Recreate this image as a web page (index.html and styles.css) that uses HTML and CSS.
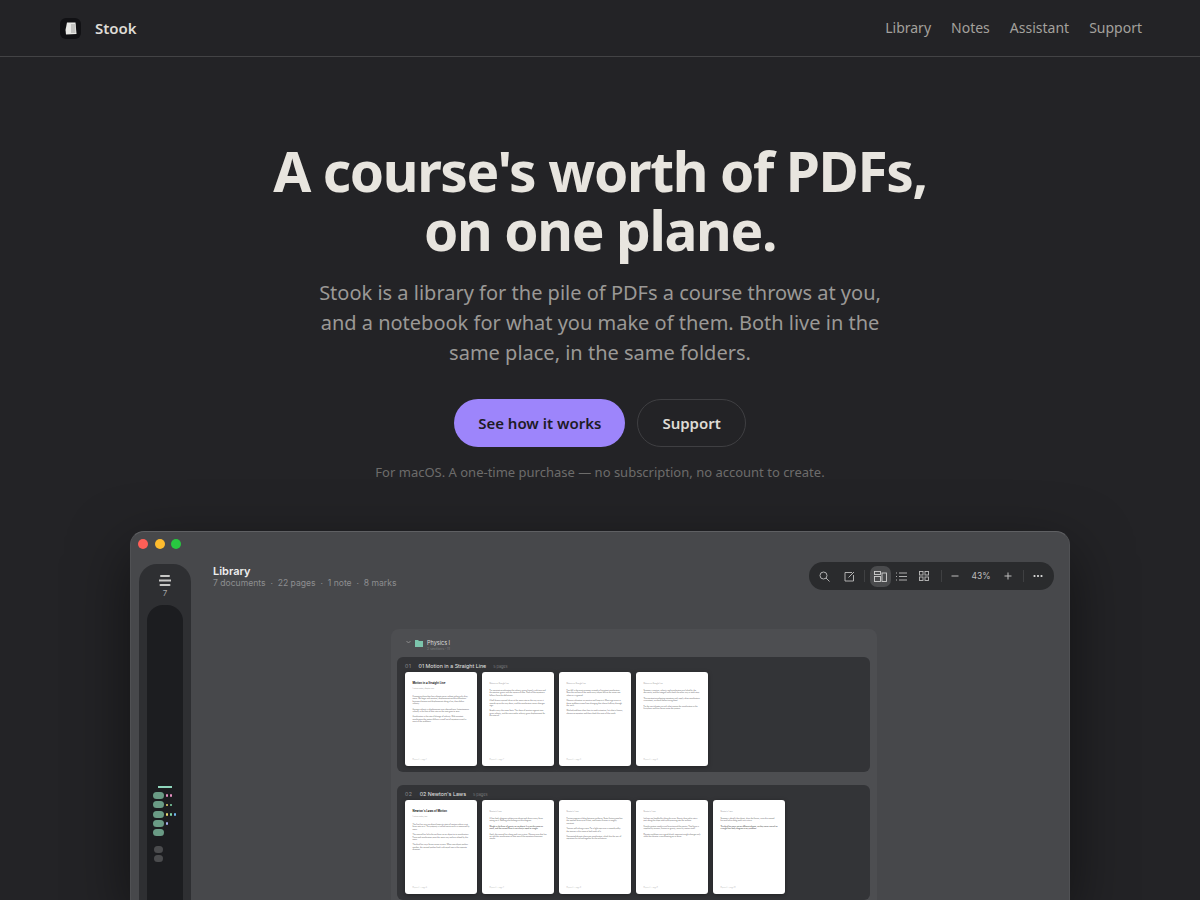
FILE: index.html
```html
<!DOCTYPE html>
<html lang="en">
<head>
    <meta charset="UTF-8">
    <meta name="viewport" content="width=device-width, initial-scale=1.0">
    <title>Stook</title>
    <link rel="stylesheet" href="styles.css">
</head>
<body>
    <header class="site-header">
        <a class="brand" href="#">
            <span class="brand-mark">
                <svg width="12" height="13" viewBox="0 0 12 13"><path d="M2 .5h8.500L11.500 12 1 12.500.5 8z" fill="#e9e9e6"/><path d="M6 2h4.500v9H6z" fill="#c4c4c2"/></svg>
            </span>
            <span>Stook</span>
        </a>
        <nav class="site-nav">
            <a href="#">Library</a>
            <a href="#">Notes</a>
            <a href="#">Assistant</a>
            <a href="#">Support</a>
        </nav>
    </header>

    <section class="hero">
        <h1>A course's worth of PDFs,<br>on one plane.</h1>
        <p class="lead">Stook is a library for the pile of PDFs a course throws at you, and a notebook for what you make of them. Both live in the same place, in the same folders.</p>
        <div class="actions">
            <a class="btn btn-primary" href="#">See how it works</a>
            <a class="btn btn-ghost" href="#">Support</a>
        </div>
        <p class="fine">For macOS. A one-time purchase — no subscription, no account to create.</p>
    </section>

    <div class="app-window">
        <div class="traffic">
            <span class="light red"></span>
            <span class="light yellow"></span>
            <span class="light green"></span>
        </div>
        <div class="app-body">
            <aside class="rail">
                <div class="rail-head">
                    <svg width="12" height="11" viewBox="0 0 12 11"><path d="M2 1h8M.5 5.500h11M1.500 10h9" stroke="#c8c8c6" stroke-width="2" stroke-linecap="round"/></svg>
                    <span>7</span>
                </div>
                <div class="rail-strip">
                    <div class="rail-bar"></div>
                    <div class="rail-row"><i class="pill"></i><i class="dot pink"></i><i class="dot pink"></i></div>
                    <div class="rail-row"><i class="pill"></i><i class="dot sand"></i><i class="dot mint"></i></div>
                    <div class="rail-row"><i class="pill"></i><i class="dot sand"></i><i class="dot mint"></i><i class="dot blue"></i></div>
                    <div class="rail-row"><i class="pill"></i><i class="dot lilac"></i></div>
                    <div class="rail-row"><i class="pill"></i></div>
                    <div class="rail-row rail-gap"><i class="pill muted"></i></div>
                    <div class="rail-row"><i class="pill muted"></i></div>
                </div>
            </aside>

            <main class="workspace">
                <div class="work-head">
                    <div>
                        <div class="work-title">Library</div>
                        <div class="work-meta">7 documents &nbsp;·&nbsp; 22 pages &nbsp;·&nbsp; 1 note &nbsp;·&nbsp; 8 marks</div>
                    </div>
                    <div class="toolbar">
                        <span class="tool"><svg width="11" height="11" viewBox="0 0 11 11" fill="none" stroke="#bebebe" stroke-width=".9"><circle cx="4.500" cy="4.500" r="3.500"/><path d="M7 7l3.500 3.500"/></svg></span>
                        <span class="tool tool-edit"><svg width="11" height="11" viewBox="0 0 11 11" fill="none" stroke="#bebebe" stroke-width=".9"><path d="M8 1.500H1v8.500h8.500V4"/><path d="M4.500 6.500L10 1"/></svg></span>
                        <i class="tool-sep"></i>
                        <span class="tool tool-on"><svg width="13" height="11" viewBox="0 0 13 11" fill="none" stroke="#d0d0d0" stroke-width=".9"><rect x=".5" y=".5" width="6" height="3"/><rect x=".5" y="5.500" width="6" height="5"/><rect x="8" y="2" width="4.500" height="8.500"/></svg></span>
                        <span class="tool tool-list"><svg width="11" height="9" viewBox="0 0 11 9" fill="none" stroke="#bebebe" stroke-width=".9"><path d="M3 1h8M3 4.500h8M3 8h8M0 1h1M0 4.500h1M0 8h1"/></svg></span>
                        <span class="tool tool-grid"><svg width="10" height="10" viewBox="0 0 10 10" fill="none" stroke="#bebebe" stroke-width=".9"><rect x=".5" y=".5" width="3.500" height="3.500"/><rect x="6" y=".5" width="3.500" height="3.500"/><rect x=".5" y="6" width="3.500" height="3.500"/><rect x="6" y="6" width="3.500" height="3.500"/></svg></span>
                        <i class="tool-sep"></i>
                        <span class="tool tool-minus"><svg width="8" height="8" viewBox="0 0 8 8" stroke="#bebebe" stroke-width="1"><path d="M.5 4h7"/></svg></span>
                        <span class="zoom-val">43%</span>
                        <span class="tool"><svg width="8" height="8" viewBox="0 0 8 8" stroke="#bebebe" stroke-width="1"><path d="M.5 4h7M4 .5v7"/></svg></span>
                        <i class="tool-sep"></i>
                        <span class="tool tool-more"><svg width="10" height="4" viewBox="0 0 10 4" fill="#e0e0e0"><circle cx="1.500" cy="2" r="1.100"/><circle cx="5" cy="2" r="1.100"/><circle cx="8.500" cy="2" r="1.100"/></svg></span>
                    </div>
                </div>

                <div class="folder">
                    <div class="folder-head">
                        <svg width="5" height="4" viewBox="0 0 5 4" fill="none" stroke="#9a9a9a" stroke-width=".8"><path d="M.5 1l2 2 2-2"/></svg>
                        <svg width="8" height="7" viewBox="0 0 8 7"><path d="M0 0h3l1 1h4v6H0z" fill="#7cc4ac"/></svg>
                        <div class="folder-text">
                            <div class="folder-name">Physics I</div>
                            <div class="folder-meta">2 sections · 11</div>
                        </div>
                    </div>

                    <section class="chapter">
                        <div class="chapter-head"><span class="chapter-no">01</span><span class="chapter-name">01 Motion in a Straight Line</span><span class="chapter-count">5 pages</span></div>
                        <div class="pages">
                            <article class="page">
                                <h4>Motion in a Straight Line</h4>
                                <small>Lecture notes, chapter one</small>
                                <p>Kinematics describes how objects move without asking why they move. We begin with position, displacement and the distinction between distance and displacement along a line, then define velocity.</p>
                                <p>Average velocity is displacement over elapsed time. Instantaneous velocity is the limit of that ratio as the time goes to zero.</p>
                                <p>Acceleration is the rate of change of velocity. With constant acceleration the motion follows a small set of equations used in most of the problems.</p>
                                <footer>Physics I — page 1</footer>
                            </article>
                            <article class="page">
                                <small>Motion in a Straight Line</small>
                                <p>For constant acceleration the velocity grows linearly with time and the position grows with the square of time. Each of the equations follows from the definitions.</p>
                                <p>A ball thrown upward slows at the same rate on the way up as it speeds up on the way down, and the acceleration never changes sign.</p>
                                <p>Graphs carry the same facts. The slope of position against time gives velocity, and the area under velocity gives displacement for the interval.</p>
                                <footer>Physics I — page 2</footer>
                            </article>
                            <article class="page">
                                <small>Motion in a Straight Line</small>
                                <p>Free fall is the most common example of constant acceleration. Near the surface of the earth every object falls at the same rate when air is ignored.</p>
                                <p>Choose a direction as positive and keep to it. Most sign errors in these problems come from changing that choice halfway through the work.</p>
                                <p>Worked problems show how to read a situation, list what is known, choose an equation and then check the units of the result.</p>
                                <footer>Physics I — page 3</footer>
                            </article>
                            <article class="page">
                                <small>Motion in a Straight Line</small>
                                <p>Summary: position, velocity and acceleration are linked by the derivative, and the integral walks back the other way in each step.</p>
                                <p>The constant acceleration equations only apply when acceleration is constant, so check before using them.</p>
                                <p>For the next chapter we ask what causes the acceleration in the first place and how forces enter the picture.</p>
                                <footer>Physics I — page 4</footer>
                            </article>
                        </div>
                    </section>

                    <section class="chapter">
                        <div class="chapter-head"><span class="chapter-no">02</span><span class="chapter-name">02 Newton's Laws</span><span class="chapter-count">5 pages</span></div>
                        <div class="pages">
                            <article class="page">
                                <h4>Newton's Laws of Motion</h4>
                                <small>Lecture notes, two</small>
                                <p>The first law says an object keeps its state of motion unless a net force acts on it. This property is called inertia and it is measured by mass.</p>
                                <p>The second law links the net force on an object to its acceleration. Force and acceleration point the same way and are related by the mass.</p>
                                <p>The third law says forces come in pairs. When one object pushes another, the second pushes back with equal size in the opposite direction.</p>
                                <footer>Physics I — page 6</footer>
                            </article>
                            <article class="page">
                                <small>Newton's Laws</small>
                                <p>A free body diagram isolates one object and draws every force acting on it. Nothing else belongs on the diagram.</p>
                                <p class="dark">Weight is the force of gravity on an object. It is not the same as mass, and the normal force is not always equal to weight.</p>
                                <p>Apply the second law along each axis in turn. Choose axes that line up with the acceleration so that one of the equations becomes simple.</p>
                                <footer>Physics I — page 7</footer>
                            </article>
                            <article class="page">
                                <small>Newton's Laws</small>
                                <p>Friction opposes sliding between surfaces. Static friction matches the applied force up to a limit, and kinetic friction is roughly constant.</p>
                                <p>Tension pulls along a rope. For a light rope over a smooth pulley the tension is the same at both ends of it.</p>
                                <p>Connected objects share one acceleration, which lets the pair of equations be solved together for the unknowns.</p>
                                <footer>Physics I — page 8</footer>
                            </article>
                            <article class="page">
                                <small>Newton's Laws</small>
                                <p>Inclines are handled by tilting the axes. Gravity then splits into a part along the slope and a part pressing into the surface.</p>
                                <p>Circular motion needs a net force toward the centre. That force is supplied by tension, friction or gravity, never by motion itself.</p>
                                <p>Elevator problems are a good check: apparent weight changes only while the elevator is accelerating up or down.</p>
                                <footer>Physics I — page 9</footer>
                            </article>
                            <article class="page">
                                <small>Newton's Laws</small>
                                <p>Summary: identify the object, draw the forces, write the second law and solve along each axis in turn.</p>
                                <p class="dark">The third law pairs act on different objects, so they never cancel on a single free body diagram in any problem.</p>
                                <footer>Physics I — page 10</footer>
                            </article>
                        </div>
                    </section>
                </div>
            </main>
        </div>
    </div>
</body>
</html>
```

FILE: styles.css
```css
* {
    box-sizing: border-box;
}
html, body {
    margin: 0;
    padding: 0;
    height: 900px;
    overflow: hidden;
}
body {
    font-family: "Noto Sans", sans-serif;
    background-color: #232326;
    color: #e8e5df;
}
a {
    color: inherit;
    text-decoration: none;
}

/* header */
.site-header {
    height: 57px;
    padding: 0 58px 0 60px;
    display: flex;
    align-items: center;
    justify-content: space-between;
    border-bottom: 1px solid #434345;
}
.brand {
    display: flex;
    align-items: center;
    gap: 14px;
    font-size: 15px;
    font-weight: 600;
    color: #dedbd5;
}
.brand-mark {
    width: 21px;
    height: 21px;
    border-radius: 6px;
    background-color: #111114;
    display: flex;
    align-items: center;
    justify-content: center;
}
.site-nav {
    display: flex;
    gap: 20px;
    padding-bottom: 2px;
    font-size: 14px;
    color: #a3a19d;
}

/* hero */
.hero {
    padding-top: 84px;
    text-align: center;
}
h1 {
    margin: 0;
    font-size: 55px;
    line-height: 59.400px;
    font-weight: 700;
    letter-spacing: -0.025em;
    color: #e8e5df;
}
.lead {
    width: 600px;
    margin: 18.200px auto 0;
    font-size: 20px;
    line-height: 30px;
    color: #9b9996;
}
.actions {
    display: flex;
    justify-content: center;
    gap: 12px;
    margin-top: 31px;
}
.btn {
    height: 48px;
    border-radius: 25px;
    display: flex;
    align-items: center;
    font-size: 15px;
    font-weight: 600;
}
.btn-primary {
    padding: 0 24px;
    background-color: #9d85fb;
    color: #1d1b26;
}
.btn-ghost {
    padding: 0 24px;
    border: 1px solid #3f3f42;
    color: #dedbd5;
}
.fine {
    margin: 16px 0 0;
    font-size: 13px;
    line-height: 18px;
    color: #6d6c6b;
}

/* app window */
.app-window {
    width: 940px;
    height: 369px;
    margin: 50px auto 0;
    border-radius: 14px 14px 0 0;
    border: 1px solid #505154;
    border-top-color: #5f6063;
    border-bottom: none;
    background-color: #47484b;
    box-shadow: 0 20px 60px rgba(0, 0, 0, 0.5);
    overflow: hidden;
    font-family: Inter, sans-serif;
}
.traffic {
    height: 32px;
    padding: 7px 0 0 7px;
    display: flex;
    gap: 6.500px;
}
.light {
    width: 10px;
    height: 10px;
    border-radius: 50%;
}
.red { background-color: #ff5f57; }
.yellow { background-color: #febc2e; }
.green { background-color: #28c840; }

.app-body {
    display: flex;
    padding-left: 8px;
}
.rail {
    width: 52px;
    height: 340px;
    flex-shrink: 0;
    padding: 0 8px;
    border-radius: 18px 18px 0 0;
    background-color: #2e2f32;
}
.rail-head {
    height: 41px;
    padding-top: 11px;
    display: flex;
    flex-direction: column;
    align-items: center;
    gap: 2px;
    font-size: 8px;
    line-height: 10px;
    color: #a6a6a6;
}
.rail-strip {
    height: 300px;
    padding: 181px 0 0 6px;
    border-radius: 16px 16px 0 0;
    background-color: #1c1d20;
}
.rail-bar {
    width: 14px;
    height: 2px;
    margin: 0 0 3px 5px;
    background-color: #8fd6bc;
}
.rail-row {
    height: 9.300px;
    display: flex;
    align-items: center;
    gap: 1.500px;
}
.rail-gap {
    margin-top: 7px;
}
.pill {
    width: 11px;
    height: 7px;
    border-radius: 4px;
    background-color: #6a9b85;
}
.pill.muted {
    width: 9px;
    margin-left: 1px;
    background-color: #4a4b4d;
}
.dot {
    width: 2.600px;
    height: 2.600px;
    border-radius: 1px;
}
.dot.pink { background-color: #e58fc0; }
.dot.sand { background-color: #e8d86e; }
.dot.mint { background-color: #7fd6a8; }
.dot.blue { background-color: #6fb6ee; }
.dot.lilac { background-color: #a6aef0; }

.workspace {
    flex: 1;
    min-width: 0;
    padding-right: 15px;
}
.work-head {
    display: flex;
    justify-content: space-between;
    align-items: flex-start;
    height: 67px;
    padding-left: 22px;
    margin-top: -2px;
}
.work-title {
    margin-top: 2.500px;
    font-size: 11px;
    line-height: 12px;
    font-weight: 600;
    color: #eeeeee;
}
.work-meta {
    margin-top: 1px;
    font-size: 8.600px;
    line-height: 11px;
    color: #8d8e90;
}
.toolbar {
    width: 245px;
    height: 28px;
    padding-left: 4.500px;
    border-radius: 14px;
    background-color: #2a2b2d;
    display: flex;
    align-items: center;
    gap: 1.500px;
}
.tool {
    width: 21px;
    height: 21px;
    border-radius: 7px;
    display: flex;
    align-items: center;
    justify-content: center;
}
.tool-edit {
    margin-left: 2.500px;
}
.tool-list {
    margin-left: -1.500px;
}
.tool-grid {
    margin-right: 1.500px;
}
.tool-minus {
    width: 17px;
}
.tool-more {
    width: 18px;
}
.tool-on {
    background-color: #4a4b4d;
}
.tool-sep {
    width: 1px;
    height: 12px;
    margin: 0 3.500px 0 3px;
    background-color: #3f4042;
}
.zoom-val {
    width: 31px;
    padding-left: 1px;
    text-align: center;
    font-size: 8.500px;
    color: #bebebe;
}

/* folder and pages */
.folder {
    width: 486px;
    margin-left: 200px;
    padding: 0 7px 0 6px;
    border-radius: 8px 8px 0 0;
    background-color: #4d4e51;
}
.folder-head {
    height: 28px;
    padding: 8px 0 0 9px;
    display: flex;
    align-items: flex-start;
    gap: 4px;
}
.folder-head svg {
    margin-top: 3px;
}
.folder-text {
    margin-top: 3px;
}
.folder-name {
    font-size: 5.500px;
    line-height: 7px;
    color: #dddddd;
}
.folder-meta {
    font-size: 3.500px;
    line-height: 4px;
    color: #7d7e80;
}
.chapter {
    height: 115px;
    margin-bottom: 13px;
    padding: 0 8px;
    border-radius: 6px;
    background-color: #333437;
}
.chapter-head {
    height: 15px;
    padding-top: 3px;
    display: flex;
    align-items: center;
    gap: 7px;
    font-size: 5.300px;
    color: #e6e6e6;
}
.chapter-no {
    color: #8a8b8d;
    letter-spacing: 0.1em;
}
.chapter-count {
    font-size: 3.800px;
    color: #77787a;
}
.pages {
    display: flex;
    gap: 4.700px;
}
.page {
    position: relative;
    width: 72.300px;
    height: 93.500px;
    padding: 9.500px 7.500px 0;
    border-radius: 3px;
    background-color: #ffffff;
    box-shadow: 0 1px 4px rgba(0, 0, 0, 0.35);
    color: #6a6a6a;
    font-size: 1.800px;
    line-height: 2.400px;
}
.page h4 {
    margin: 0 0 2px;
    font-size: 2.800px;
    line-height: 3px;
    font-weight: 700;
    color: #1a1a1a;
}
.page small {
    display: block;
    margin-bottom: 5.500px;
    font-size: 1.700px;
    line-height: 2px;
    color: #999999;
}
.page h4 + small {
    margin-bottom: 6.500px;
}
.page p {
    margin: 0 0 3px;
}
.page p.dark {
    color: #333333;
}
.page footer {
    position: absolute;
    left: 7.500px;
    bottom: 6px;
    font-size: 1.600px;
    line-height: 2px;
    color: #b8b8b8;
}
```
